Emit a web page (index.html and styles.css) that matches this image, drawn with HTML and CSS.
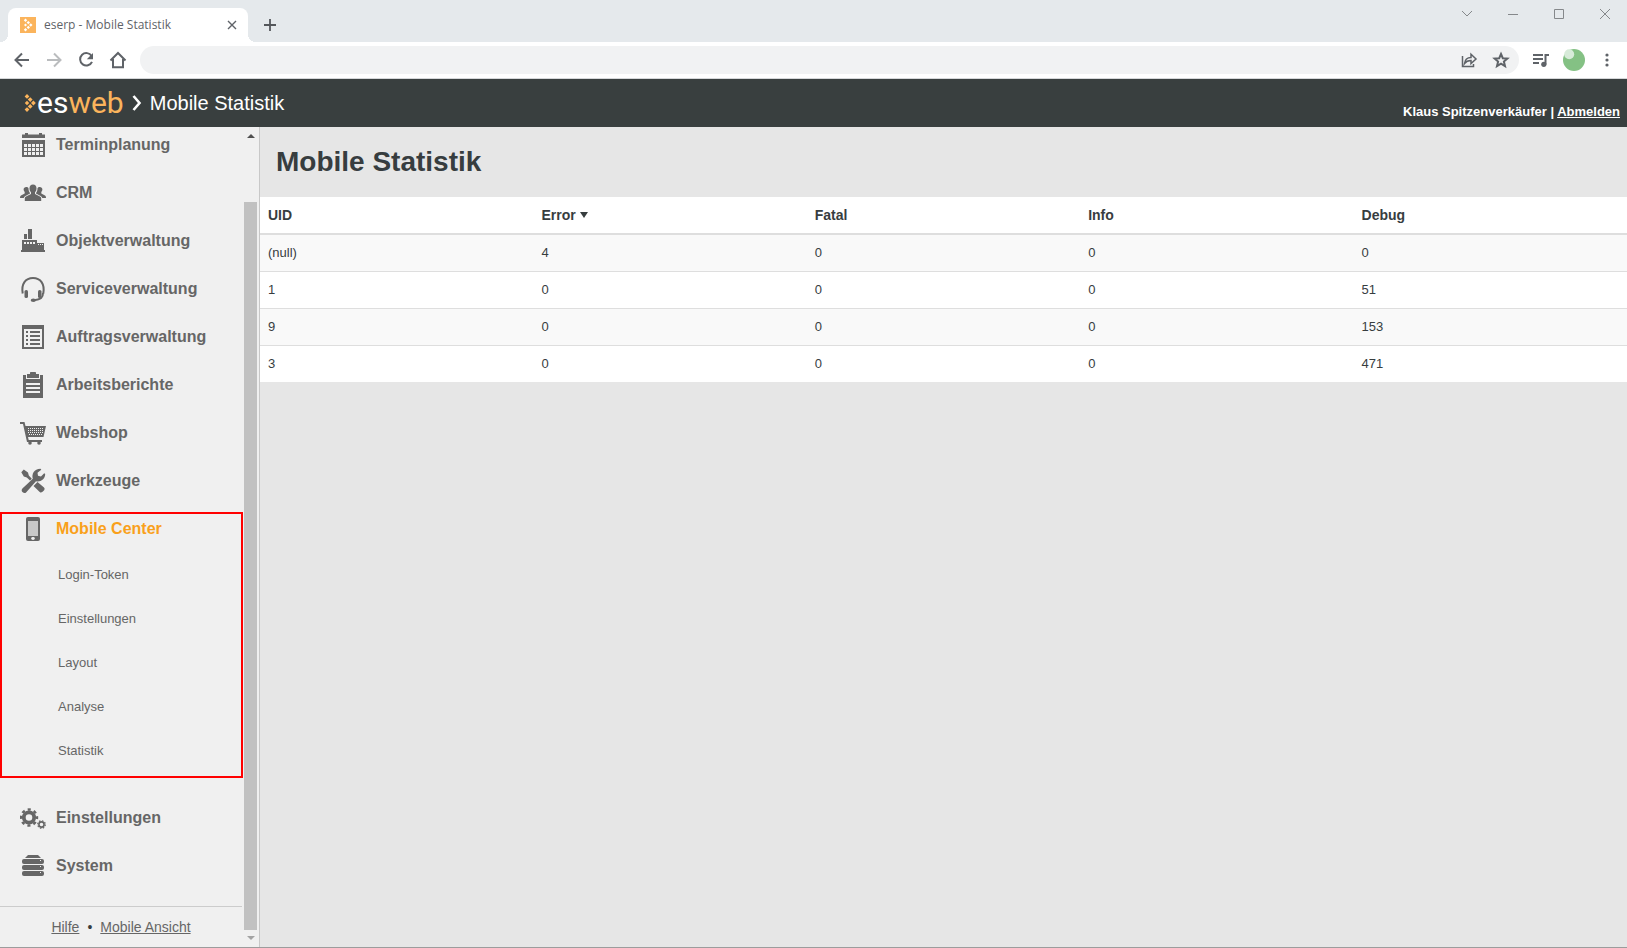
FILE: index.html
```
<!DOCTYPE html>
<html lang="de">
<head>
    <meta charset="UTF-8">
    <meta name="viewport" content="width=device-width, initial-scale=1.0">
    <title>eserp - Mobile Statistik</title>
    <link rel="stylesheet" href="styles.css">
</head>
<body>
    <!-- Browserfenster -->
    <div class="tab-strip">
        <div class="tab">
            <svg class="favicon" viewBox="0 0 16 16">
                <rect width="16" height="16" fill="#fbb45c"/>
                <path d="M5.500 1.500l1.700 1.700-1.700 1.700-1.700-1.700zM8.300 3.900L10 5.600 8.300 7.300 6.600 5.600zM10.800 6.300l1.700 1.700-1.700 1.700L9.100 8zM8.300 8.700l1.700 1.700-1.700 1.700-1.700-1.700zM5.500 11.100l1.700 1.700-1.700 1.700-1.700-1.700zM5.500 6.500L7 8 5.500 9.500 4 8z" fill="#fff"/>
            </svg>
            <span class="tab-title">eserp - Mobile Statistik</span>
            <button class="icon-button tab-close" aria-label="Tab schließen">
                <svg viewBox="0 0 16 16" width="16" height="16"><path d="M4 4l8 8M12 4l-8 8" stroke="#5f6368" stroke-width="1.400"/></svg>
            </button>
        </div>
        <button class="icon-button tab-new" aria-label="Neuer Tab">
            <svg viewBox="0 0 20 20" width="20" height="20"><path d="M10 4v12M4 10h12" stroke="#54575b" stroke-width="1.800"/></svg>
        </button>
        <div class="window-buttons">
            <button class="icon-button" aria-label="Tabs durchsuchen"><svg viewBox="0 0 12 12"><path d="M1 3l5 5 5-5"/></svg></button>
            <button class="icon-button" aria-label="Minimieren"><svg viewBox="0 0 12 12"><path d="M1 6.500h10"/></svg></button>
            <button class="icon-button" aria-label="Maximieren"><svg viewBox="0 0 12 12"><path d="M1.500 1.500h9v9h-9z"/></svg></button>
            <button class="icon-button" aria-label="Schließen"><svg viewBox="0 0 12 12"><path d="M1 1l10 10M11 1L1 11"/></svg></button>
        </div>
    </div>

    <div class="toolbar">
        <div class="toolbar-nav">
            <button class="icon-button" aria-label="Zurück"><svg viewBox="0 0 20 20"><path d="M17 10H4M10 3.500L3.500 10l6.500 6.500" class="line"/></svg></button>
            <button class="icon-button disabled" aria-label="Vorwärts"><svg viewBox="0 0 20 20"><path d="M3 10h13M10 3.500l6.500 6.500-6.500 6.500" class="line"/></svg></button>
            <button class="icon-button" aria-label="Neu laden"><svg viewBox="0 0 20 20"><path d="M15.600 6A6.200 6.200 0 1 0 16 11.800" class="line"/><path d="M17 3v6.200h-6.200z"/></svg></button>
            <button class="icon-button" aria-label="Startseite"><svg viewBox="0 0 20 20"><path d="M2.500 10.500L10 3l7.500 7.500M5 9v8.200h10V9" class="line"/></svg></button>
        </div>
        <div class="address-bar">
            <input type="text" aria-label="Adresse">
            <button class="icon-button" aria-label="Teilen"><svg viewBox="0 0 20 20"><path d="M3.500 6v10.500h11V14M5.500 13.500c.5-4 3-6 6.500-6V4.300l5 4.700-5 4.500v-3c-3 0-5 1-6.500 3z" class="line thin"/></svg></button>
            <button class="icon-button" aria-label="Lesezeichen"><svg viewBox="0 0 20 20"><path d="M10 4l1.800 4.200 4.600.4-3.500 3 1.100 4.500-4-2.400-4 2.400 1.100-4.500-3.500-3 4.600-.4z" class="line"/></svg></button>
        </div>
        <button class="icon-button" aria-label="Medien"><svg viewBox="0 0 20 20"><path d="M2 5h10M2 9h10M2 13h6M14.500 14.500V5H18" class="line"/><circle cx="12.800" cy="14.300" r="2.600"/></svg></button>
        <button class="icon-button avatar" aria-label="Profil"><svg viewBox="0 0 22 22"><circle cx="11" cy="11" r="11" fill="#84c184"/><circle cx="6.200" cy="5.200" r="5" fill="#d7ebd9"/></svg></button>
        <button class="icon-button" aria-label="Menü"><svg viewBox="0 0 20 20"><circle cx="10" cy="5" r="1.600"/><circle cx="10" cy="10" r="1.600"/><circle cx="10" cy="15" r="1.600"/></svg></button>
    </div>

    <!-- Anwendung -->
    <header class="app-header">
        <a class="logo" href="#">
            <svg viewBox="0 0 12 18" width="12" height="18">
                <path d="M3 0l2.400 2.400L3 4.800.6 2.400zM6.200 3.200l2.400 2.400L6.200 8 3.800 5.600zM9.400 6.600L11.800 9l-2.400 2.400L7 9zM6.200 10l2.400 2.400-2.400 2.400-2.400-2.400zM3 13.200l2.400 2.400L3 18 .6 15.600zM3 6.800L5.200 9 3 11.200.8 9z" fill="#fbb45c"/>
            </svg>
            <span class="logo-text">es<span>web</span></span>
        </a>
        <svg class="crumb-arrow" viewBox="0 0 10 16" width="10" height="16"><path d="M1.500 1l6 7-6 7" fill="none" stroke="#fff" stroke-width="2.600"/></svg>
        <span class="crumb">Mobile Statistik</span>
        <div class="user">Klaus Spitzenverkäufer | <a href="#">Abmelden</a></div>
    </header>

    <div class="app-body">
        <aside class="sidebar">
            <div class="sidebar-content">
                <nav class="menu">
                    <a class="menu-item" href="#">
                        <svg viewBox="0 0 26 26"><path d="M2 2.500h3V1h3v1.500h11V1h3v1.500h3V6H2z"/><path fill-rule="evenodd" d="M2 8h23v17H2zM4 12v3h3v-3zM8 12v3h3v-3zM12 12v3h3v-3zM16 12v3h3v-3zM20 12v3h3v-3zM4 16v3h3v-3zM8 16v3h3v-3zM12 16v3h3v-3zM16 16v3h3v-3zM20 16v3h3v-3zM4 20v3h3v-3zM8 20v3h3v-3zM12 20v3h3v-3zM16 20v3h3v-3zM20 20v3h3v-3z"/></svg>
                        Terminplanung
                    </a>
                    <a class="menu-item" href="#">
                        <svg viewBox="0 0 26 26"><path d="M13 4.500c2.200 0 3.500 1.500 3.500 3.800 0 1.800-.6 3.200-1.500 4v1.600l5 2.600c.9.500 1.200 1.100 1.200 2.100V21H4.800v-2.400c0-1 .3-1.600 1.200-2.100l5-2.600v-1.600c-.9-.8-1.500-2.200-1.500-4 0-2.300 1.300-3.800 3.500-3.800z"/><path d="M6.300 7c1 0 1.800.4 2.200 1.200 0 2 .5 3.600 1.500 4.700v.6l-4.600 2.400c-1 .5-1.500 1.200-1.600 2.100H0c0-1.500.2-2.100 1-2.600l3.700-2V12C4 11.300 3.600 10.500 3.600 9.500 3.600 8 4.700 7 6.300 7zM19.700 7c-1 0-1.800.4-2.200 1.200 0 2-.5 3.600-1.500 4.700v.6l4.600 2.400c1 .5 1.500 1.200 1.600 2.100H26c0-1.500-.2-2.100-1-2.600l-3.700-2V12c.7-.7 1.100-1.500 1.100-2.500C22.400 8 21.300 7 19.700 7z"/></svg>
                        CRM
                    </a>
                    <a class="menu-item" href="#">
                        <svg viewBox="0 0 26 26"><path d="M4 6h3v5H4zM8 1h4v10H8zM1 22h24v2H1z"/><path fill-rule="evenodd" d="M2 12h15v3h7v8H2zM4 14v2h2v-2zM7 14v2h2v-2zM10 14v2h2v-2zM13 14v2h2v-2zM18 16v1h1v-1zM20 16v1h1v-1zM22 16v1h1v-1z"/></svg>
                        Objektverwaltung
                    </a>
                    <a class="menu-item" href="#">
                        <svg viewBox="0 0 26 26"><path d="M2.700 17.500C1 8 5.500 2 13 2s12 6 10.300 15.500M23 17c0 4.500-2 6.500-9 7.200" fill="none" stroke="#666" stroke-width="2"/><rect x="4.500" y="14" width="3.500" height="8" rx="1.600"/><rect x="18" y="14" width="3.500" height="8" rx="1.600"/><ellipse cx="13.300" cy="24.200" rx="2.600" ry="1.700"/></svg>
                        Serviceverwaltung
                    </a>
                    <a class="menu-item" href="#">
                        <svg viewBox="0 0 26 26"><path fill-rule="evenodd" d="M2 1h22v24H2zM4 5v18h18V5z"/><path d="M6 7h2v2H6zM10 7h10v2H10zM6 11h2v2H6zM10 11h10v2H10zM6 15h2v2H6zM10 15h10v2H10zM6 19h2v2H6zM10 19h10v2H10z"/></svg>
                        Auftragsverwaltung
                    </a>
                    <a class="menu-item" href="#">
                        <svg viewBox="0 0 26 26"><path d="M7 2h3V1c0-.6.400-1 1-1h4c.6 0 1 .4 1 1v1h3v4H7z"/><path fill-rule="evenodd" d="M3 3h3v4h14V3h3v23H3zM6 11v2h14v-2zM6 15v2h14v-2zM6 19v2h14v-2z"/></svg>
                        Arbeitsberichte
                    </a>
                    <a class="menu-item" href="#">
                        <svg viewBox="0 0 26 26"><path d="M0 2h4.500l1 4H26l-2.500 11H8l.7 3H22v2H7L3 4H0z"/><circle cx="10" cy="23" r="1.800"/><circle cx="19" cy="23" r="1.800"/><path d="M8 8.500h15M8 10.500h15M8 12.500h15M9 14.500h13" stroke="#f0f0f0" stroke-width="1" stroke-dasharray="1 1" fill="none"/></svg>
                        Webshop
                    </a>
                    <a class="menu-item" href="#">
                        <svg viewBox="0 0 26 26"><path d="M1.300 4.200L3.800 1.500l4.200 3 .8 3 3 3.200-1.800 1.800-3.200-3-3-.9zM13.500 18l4-4 6.500 5.500c1.200 1.200.5 2.500-.6 3.600-1.200 1.200-2.500 2-3.700.8z"/><path d="M2.400 20.500L12.800 10.800C11.500 6 14 1 20.500.8l.8.900-3.800 3 .5 3 3 .7 3.200-3.200 1 .8c-.2 5.500-4.700 8.200-9.200 7.300L6.300 24.200c-1.200 1.300-2.500 1.100-3.600.1-1.200-1.100-1.400-2.600-.3-3.800z"/></svg>
                        Werkzeuge
                    </a>

                    <div class="menu-group">
                        <a class="menu-item active" href="#">
                            <svg viewBox="0 0 26 26"><rect x="6" y="1" width="14" height="24" rx="2"/><rect x="8" y="5" width="10" height="15" fill="#c8c8c8"/><ellipse cx="13" cy="22.500" rx="1.800" ry="1.400" fill="#f0f0f0"/></svg>
                            Mobile Center
                        </a>
                        <div class="submenu">
                            <a href="#">Login-Token</a>
                            <a href="#">Einstellungen</a>
                            <a href="#">Layout</a>
                            <a href="#">Analyse</a>
                            <a href="#">Statistik</a>
                        </div>
                    </div>

                    <a class="menu-item" href="#">
                        <svg viewBox="0 0 26 26">
                            <circle cx="9" cy="12.500" r="5.200" fill="none" stroke="#666" stroke-width="3.800"/>
                            <circle cx="9" cy="12.500" r="8" fill="none" stroke="#666" stroke-width="2.400" stroke-dasharray="3.140 3.140" stroke-dashoffset="1.570"/>
                            <circle cx="21.500" cy="19.500" r="2.600" fill="none" stroke="#666" stroke-width="1.600"/>
                            <circle cx="21.500" cy="19.500" r="3.800" fill="none" stroke="#666" stroke-width="1.200" stroke-dasharray="1.490 1.490"/>
                        </svg>
                        Einstellungen
                    </a>
                    <a class="menu-item" href="#">
                        <svg viewBox="0 0 26 26"><path d="M8 2h10l3 3H5z"/><rect x="2" y="6" width="22" height="5" rx="2"/><rect x="2" y="12" width="22" height="5" rx="2"/><rect x="2" y="18" width="22" height="5" rx="2"/><path d="M20 7h1v1h-1zM20 13h1v1h-1zM20 19h1v1h-1z" fill="#f0f0f0"/></svg>
                        System
                    </a>
                </nav>
                <div class="sidebar-footer">
                    <a href="#">Hilfe</a>
                    <span>•</span>
                    <a href="#">Mobile Ansicht</a>
                </div>
            </div>
            <div class="scrollbar">
                <span class="scroll-up"></span>
                <span class="scroll-thumb"></span>
                <span class="scroll-down"></span>
            </div>
        </aside>

        <main>
            <h1>Mobile Statistik</h1>
            <table>
                <thead>
                    <tr>
                        <th>UID</th>
                        <th aria-sort="descending">Error <span class="sort-arrow"></span></th>
                        <th>Fatal</th>
                        <th>Info</th>
                        <th>Debug</th>
                    </tr>
                </thead>
                <tbody>
                    <tr><td>(null)</td><td>4</td><td>0</td><td>0</td><td>0</td></tr>
                    <tr><td>1</td><td>0</td><td>0</td><td>0</td><td>51</td></tr>
                    <tr><td>9</td><td>0</td><td>0</td><td>0</td><td>153</td></tr>
                    <tr><td>3</td><td>0</td><td>0</td><td>0</td><td>471</td></tr>
                </tbody>
            </table>
        </main>
    </div>
</body>
</html>
```
FILE: styles.css
```
* {
    box-sizing: border-box;
}

body {
    margin: 0;
    height: 100vh;
    display: flex;
    flex-direction: column;
    font-family: "Liberation Sans", Arial, sans-serif;
    font-size: 13px;
    line-height: 20px;
    color: #373d3f;
    background: #e6e6e6;
}

.icon-button {
    display: flex;
    align-items: center;
    justify-content: center;
    padding: 0;
    border: none;
    background: none;
    cursor: pointer;
}

/* Tableiste */
.tab-strip {
    flex: none;
    display: flex;
    height: 42px;
    padding: 8px 0 0 8px;
    background: #e5e9ec;
}

.tab {
    position: relative;
    display: flex;
    align-items: center;
    width: 240px;
    padding: 0 8px 0 12px;
    background: #fff;
    border-radius: 8px 8px 0 0;
}

.tab::before,
.tab::after {
    content: "";
    position: absolute;
    bottom: 0;
    width: 8px;
    height: 8px;
}

.tab::before {
    left: -8px;
    background: radial-gradient(circle at 0 0, transparent 8px, #fff 8px);
}

.tab::after {
    right: -8px;
    background: radial-gradient(circle at 100% 0, transparent 8px, #fff 8px);
}

.favicon {
    width: 16px;
    height: 16px;
    margin-right: 8px;
}

.tab-title {
    flex: 1;
    font-family: "Open Sans", "Noto Sans", sans-serif;
    font-size: 12px;
    white-space: nowrap;
    color: #5f6368;
}

.tab-new {
    margin-left: 12px;
}

.window-buttons {
    display: flex;
    height: 12px;
    gap: 34px;
    margin-left: auto;
    padding-right: 16px;
}

.window-buttons svg {
    width: 12px;
    height: 12px;
    fill: none;
    stroke: #85888b;
}

/* Symbolleiste */
.toolbar {
    flex: none;
    display: flex;
    align-items: center;
    gap: 12px;
    height: 37px;
    padding: 0 10px 0 12px;
    background: #fff;
    border-bottom: 1px solid #d5d7d9;
}

.toolbar svg {
    width: 20px;
    height: 20px;
    fill: #5f6368;
}

.toolbar .line {
    fill: none;
    stroke: #5f6368;
    stroke-width: 2;
}

.toolbar .thin {
    stroke-width: 1.5;
}

.toolbar .disabled .line {
    stroke: #babcbe;
}

.toolbar .avatar svg {
    width: 22px;
    height: 22px;
}

.toolbar-nav {
    display: flex;
    gap: 12px;
}

.address-bar {
    flex: 1;
    display: flex;
    align-items: center;
    gap: 12px;
    height: 28px;
    padding: 0 8px 0 12px;
    border-radius: 14px;
    background: #f1f2f3;
}

.address-bar input {
    flex: 1;
    border: none;
    outline: none;
    background: none;
}

/* Kopfzeile */
.app-header {
    flex: none;
    display: flex;
    align-items: center;
    height: 48px;
    padding: 0 7px 0 24px;
    color: #fff;
    background: #393f3f;
}

.logo {
    display: flex;
    align-items: center;
    text-decoration: none;
}

.logo-text {
    padding-left: 1px;
    font-family: Roboto, sans-serif;
    font-size: 30px;
    line-height: 48px;
    color: #fff;
}

.logo-text span {
    color: #fbb45c;
}

.crumb-arrow {
    margin: 0 8px;
}

.crumb {
    font-size: 20px;
}

.user {
    align-self: flex-end;
    margin-left: auto;
    padding-bottom: 5px;
    font-weight: bold;
}

.user a {
    color: #fff;
}

.app-body {
    flex: 1;
    display: flex;
    min-height: 0;
    border-bottom: 1px solid #9c9c9c;
}

/* Seitenleiste */
.sidebar {
    flex: none;
    display: flex;
    width: 260px;
    overflow: hidden;
    border-right: 1px solid #c8c8c8;
    background: #f0f0f0;
}

.sidebar-content {
    flex: 1;
}

.menu {
    margin-top: -6px;
}

.menu-item {
    display: flex;
    align-items: center;
    gap: 10px;
    height: 48px;
    padding-left: 20px;
    font-size: 16px;
    font-weight: bold;
    text-decoration: none;
    color: #666;
}

.menu-item svg {
    width: 26px;
    height: 26px;
    fill: #666;
}

.menu-item.active {
    color: #f9a01b;
}

.menu-group {
    position: relative;
    padding-bottom: 21px;
}

.menu-group::after {
    content: "";
    position: absolute;
    inset: 7px -1px 16px 0;
    border: 2px solid #f00;
    pointer-events: none;
}

.submenu a {
    display: block;
    padding-left: 58px;
    line-height: 44px;
    text-decoration: none;
    color: #666;
}

.sidebar-footer {
    display: flex;
    justify-content: center;
    gap: 8px;
    margin-top: 16px;
    padding: 10px 0;
    border-top: 1px solid #ccc;
    font-size: 14px;
}

.sidebar-footer a {
    color: #666;
}

.scrollbar {
    display: flex;
    flex-direction: column;
    align-items: center;
    width: 17px;
    padding: 7px 0;
}

.scroll-up,
.scroll-down {
    border: 4px solid transparent;
}

.scroll-up {
    border-top: none;
    border-bottom-color: #505050;
}

.scroll-thumb {
    flex: 1;
    width: 13px;
    margin: 64px 0 6px;
    background: #c1c1c1;
}

.scroll-down {
    border-bottom: none;
    border-top-color: #a3a3a3;
}

/* Inhalt */
main {
    flex: 1;
}

h1 {
    margin: 0;
    padding: 15px 16px;
    font-size: 28px;
    line-height: 40px;
}

table {
    width: 100%;
    table-layout: fixed;
    border-spacing: 0;
    background: #fff;
}

th,
td {
    padding: 8px;
    text-align: left;
}

th {
    font-size: 14px;
    border-bottom: 2px solid #dedede;
}

tbody tr:nth-child(odd) {
    background: #f9f9f9;
}

tbody tr + tr td {
    border-top: 1px solid #dedede;
}

.sort-arrow {
    display: inline-block;
    border: 4px solid transparent;
    border-top: 6px solid #373d3f;
    border-bottom: none;
    vertical-align: 2px;
}
```
